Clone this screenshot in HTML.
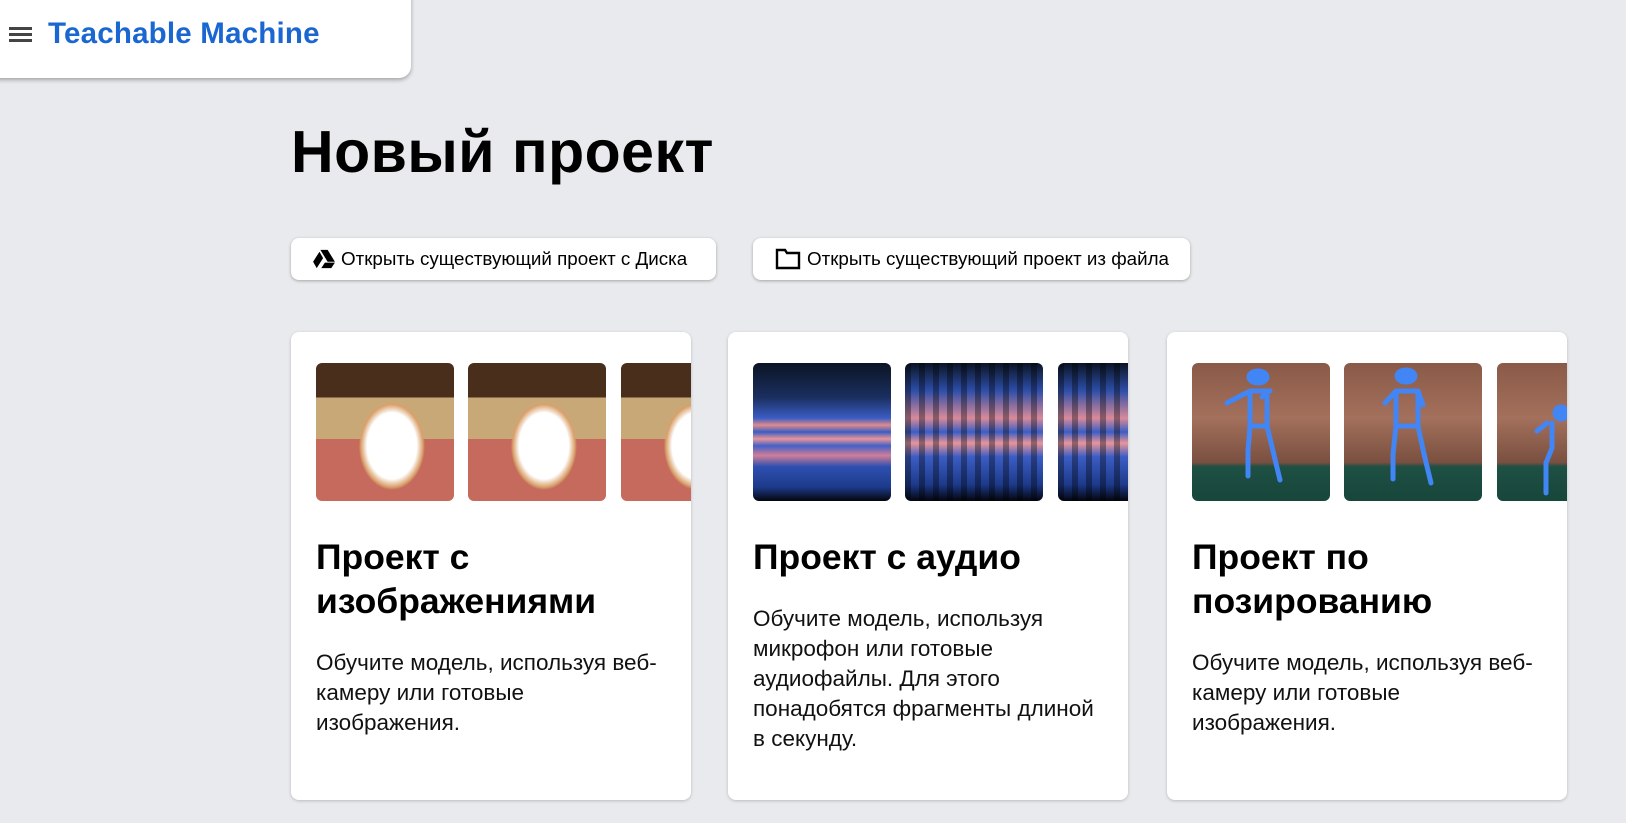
<!DOCTYPE html>
<html><head><meta charset="utf-8"><style>
*{box-sizing:border-box;margin:0;padding:0}
body{width:1626px;height:823px;overflow:hidden;background:#e8eaed;font-family:"Liberation Sans",sans-serif;color:#000;position:relative}
.hdr{position:absolute;left:-10px;top:-10px;width:421px;height:88px;background:#fff;border-radius:0 0 12px 0;box-shadow:0 2px 4px rgba(0,0,0,.3)}
.ham{position:absolute;width:23px}
.ham i{display:block;height:3px;background:#444;margin-bottom:3px}
.logo{position:absolute;font-size:29.5px;font-weight:bold;color:#1a67d2;letter-spacing:.2px}
h1{position:absolute;left:291px;top:118px;font-size:59px;font-weight:bold;letter-spacing:.5px}
.btn{position:absolute;top:238px;height:42px;background:#fff;border-radius:8px;box-shadow:0 1px 3px rgba(0,0,0,.3);font-size:18.8px;display:flex;align-items:center;padding-left:22px;white-space:nowrap}
.btn svg{margin-right:6px}
.card{position:absolute;top:332px;width:400px;height:468px;background:#fff;border-radius:8px;box-shadow:0 1px 3px rgba(0,0,0,.2);overflow:hidden}
.th{position:absolute;top:31px;width:138px;height:138px;border-radius:6px;overflow:hidden}
.card h2{position:absolute;left:25px;top:203px;font-size:35.5px;font-weight:bold;line-height:44px;width:370px}
.card p{position:absolute;left:25px;font-size:22.5px;line-height:30px;width:356px;color:#111}
.dog{background:radial-gradient(ellipse 30% 40% at 55% 60%,#fff 0 60%,#d9a06a 75%,transparent 80%),linear-gradient(180deg,#4a2e1c 0 25%,#c9a878 25% 55%,#c56a5c 55%)}
.spec1{background:linear-gradient(180deg,#0b1424 0,#1a2f5f 25%,#3b5dc4 40%,#e08a8c 45%,#3b5dc4 50%,#e8959a 55%,#4260c8 60%,#d07e98 67%,#2e4fb0 75%,#1d3a8a 90%,#03050c 100%)}
.spec2{background:repeating-linear-gradient(90deg,rgba(0,0,0,.35) 0 6px,transparent 6px 14px),linear-gradient(180deg,#0b1424 0,#2d4ea8 20%,#d88a9a 40%,#3a5dc4 50%,#e8959a 58%,#3b5dc4 68%,#1d3a8a 88%,#03050c 100%)}
.pose{background:linear-gradient(180deg,#8a5a48 0,#a3705c 40%,#7a5040 72%,#1f5044 75%,#17463b 100%)}
</style></head><body>
<div class="hdr"><div class="ham" style="left:19px;top:37px"><i></i><i></i><i></i></div><div class="logo" style="left:58px;top:27px">Teachable Machine</div></div>
<h1>Новый проект</h1>
<div class="btn" style="left:291px;width:425px"><svg width="22" height="20" viewBox="0 0 24 22"><path d="M8 1h8l8 13h-8z M7 3l4 7-7 11-4-7z M9 21l4-6h11l-4 6z" fill="#000"/></svg>Открыть существующий проект с Диска</div>
<div class="btn" style="left:753px;width:437px"><svg width="26" height="22" viewBox="0 0 26 22"><path d="M2 2h8l2 3h12v15H2z" fill="none" stroke="#000" stroke-width="2.4"/></svg>Открыть существующий проект из файла</div>

<div class="card" style="left:291px">
<div class="th dog" style="left:25px"></div><div class="th dog" style="left:177px"></div><div class="th dog" style="left:330px"></div>
<h2>Проект с изображениями</h2>
<p style="top:316px">Обучите модель, используя веб-камеру или готовые изображения.</p></div>

<div class="card" style="left:728px">
<div class="th spec1" style="left:25px"></div><div class="th spec2" style="left:177px"></div><div class="th spec2" style="left:330px"></div>
<h2>Проект с аудио</h2>
<p style="top:272px">Обучите модель, используя микрофон или готовые аудиофайлы. Для этого понадобятся фрагменты длиной в секунду.</p></div>

<div class="card" style="left:1167px">
<div class="th pose" style="left:25px"><svg width="138" height="138"><g stroke="#4285f4" stroke-width="5" fill="#4285f4" stroke-linecap="round"><ellipse cx="66" cy="14" rx="9" ry="6"/><path d="M58 28h20M58 28v35h17V28M58 28l-23 12M75 28l-5 6M58 63l-2 25v25M75 63l6 25 7 29" fill="none"/></g></svg></div>
<div class="th pose" style="left:177px"><svg width="138" height="138"><g stroke="#4285f4" stroke-width="5" fill="#4285f4" stroke-linecap="round"><ellipse cx="62" cy="13" rx="9" ry="6"/><path d="M52 28h22M52 28v35h22V28M52 28l-11 12M74 28l5 14M52 63l-3 28v25M74 63l6 28 7 29" fill="none"/></g></svg></div>
<div class="th pose" style="left:330px"><svg width="138" height="138"><g stroke="#4285f4" stroke-width="5" fill="#4285f4" stroke-linecap="round"><circle cx="64" cy="50" r="6"/><path d="M50 60l-10 8M55 60v25l-6 15v30" fill="none"/></g></svg></div>
<h2>Проект по позированию</h2>
<p style="top:316px">Обучите модель, используя веб-камеру или готовые изображения.</p></div>
</body></html>
